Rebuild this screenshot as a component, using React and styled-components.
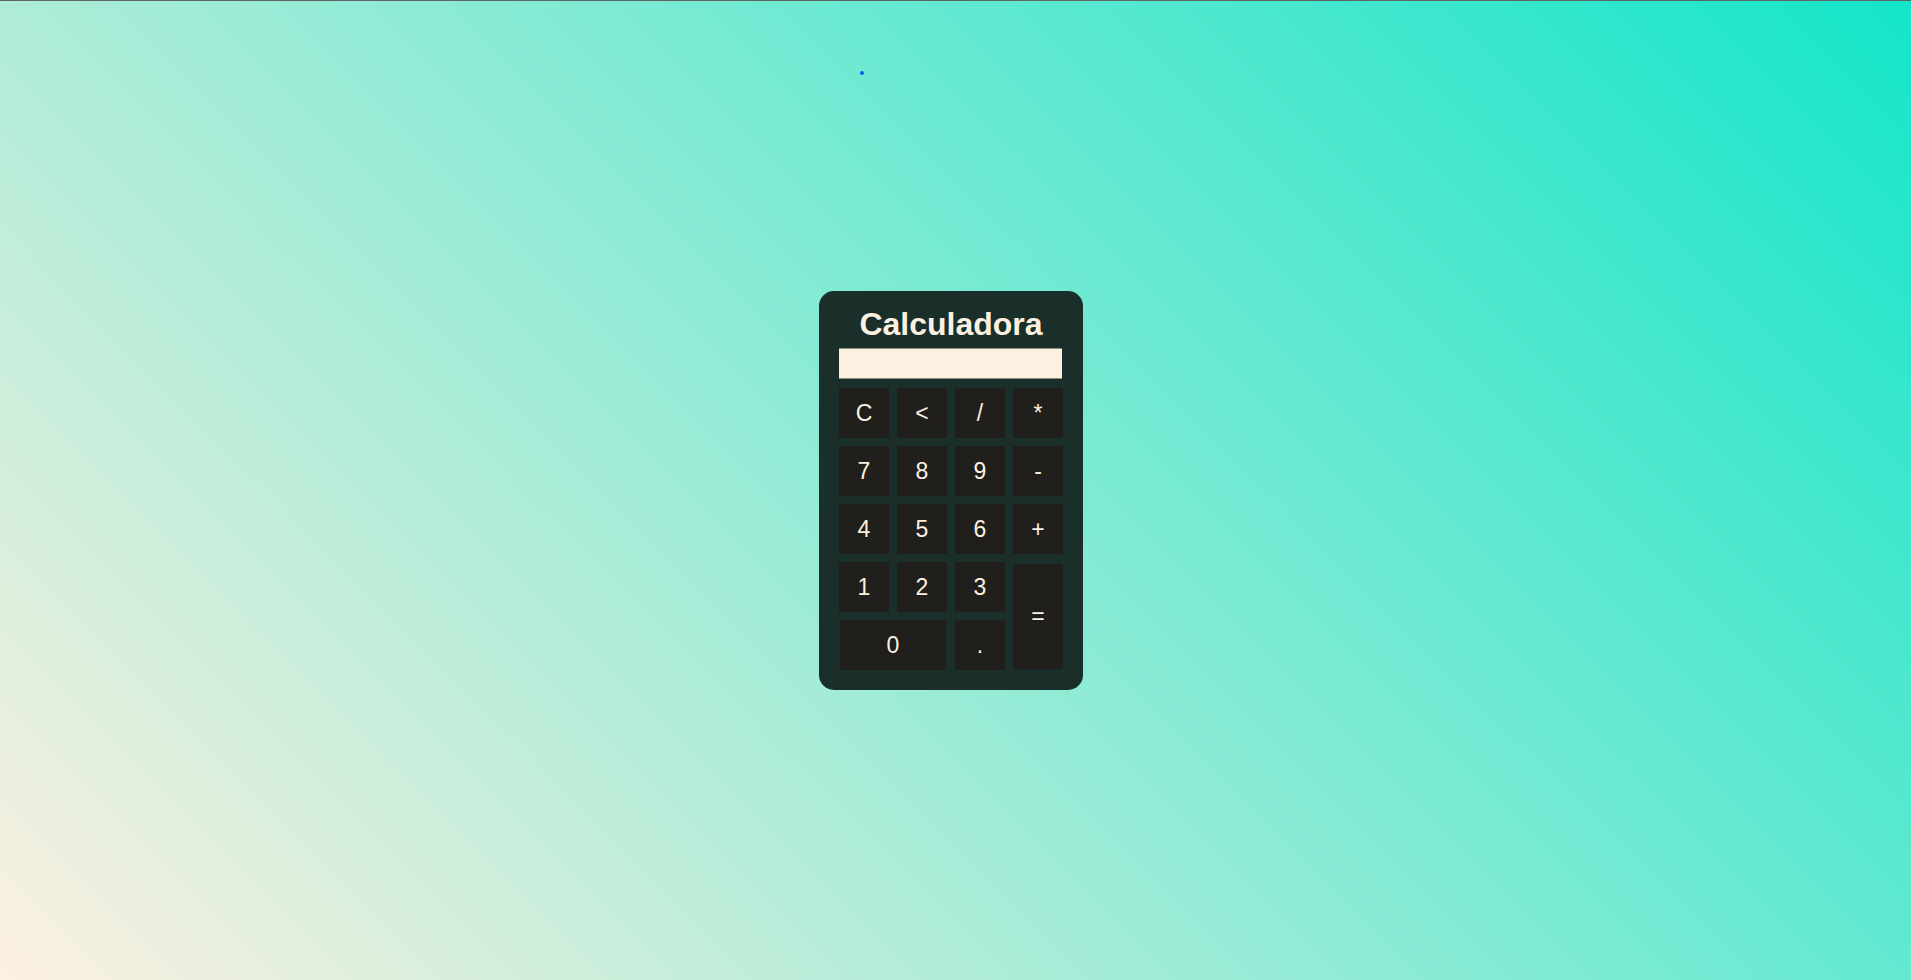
import React, { useState } from 'react';
import styled, { createGlobalStyle } from 'styled-components';

const GlobalStyle = createGlobalStyle`
    html, body {
        margin: 0;
        padding: 0;
        overflow: hidden;
    }
    body {
        font-family: 'Liberation Sans', Arial, sans-serif;
    }
`;

const Page = styled.div`
    position: relative;
    box-sizing: border-box;
    height: 100vh;
    border-top: 1px solid #5f6563;
    background: linear-gradient(45deg, #fdf0e0, #14e5c9);
    display: flex;
    align-items: center;
    justify-content: center;
    padding-right: 9px;
`;

const Dot = styled.span`
    position: absolute;
    left: 860px;
    top: 70px;
    width: 4px;
    height: 4px;
    border-radius: 50%;
    background: #0a5ce6;
`;

const Card = styled.div`
    width: 224px;
    padding: 15px 20px 20px;
    background: #1a2e2a;
    border-radius: 15px;
    display: flex;
    flex-direction: column;
`;

const Title = styled.h1`
    margin: 0 0 5px;
    font-size: 32px;
    font-weight: 700;
    text-align: center;
    color: #fdf0e0;
`;

const Display = styled.input`
    box-sizing: border-box;
    width: 223px;
    height: 31px;
    margin: 0 0 9px;
    border: none;
    border-top: 1px solid #8c8c84;
    border-bottom: 1px solid #8c8c84;
    background: #fdf0e0;
    font-family: 'Liberation Sans', Arial, sans-serif;
    font-size: 20px;
    text-align: right;
    padding: 0 6px;
    outline: none;
`;

const Keys = styled.div`
    display: grid;
    grid-template-columns: repeat(4, 50px);
    grid-auto-rows: 50px;
    gap: 8px;
`;

const Key = styled.button`
    border: none;
    padding: 0;
    margin: ${(p) => p.$inset || '0'};
    background: #201f1c;
    color: #fdf0e0;
    font-family: 'Liberation Sans', Arial, sans-serif;
    font-size: 23px;
    cursor: pointer;
    grid-column: ${(p) => (p.$wide ? 'span 2' : 'auto')};
    grid-row: ${(p) => (p.$tall ? 'span 2' : 'auto')};

    &:hover {
        background: #2b2a26;
    }
`;

const keys = [
    { label: 'C' }, { label: '<' }, { label: '/' }, { label: '*' },
    { label: '7' }, { label: '8' }, { label: '9' }, { label: '-' },
    { label: '4' }, { label: '5' }, { label: '6' }, { label: '+' },
    { label: '1' }, { label: '2' }, { label: '3' },
    { label: '=', tall: true, inset: '2px 0 1px' },
    { label: '0', wide: true, inset: '0 1px' }, { label: '.' },
];

const App = () => {
    const [value, setValue] = useState('');

    const handleKey = (label) => {
        if (label === 'C') return setValue('');
        if (label === '<') return setValue((v) => v.slice(0, -1));
        if (label === '=') {
            try {
                // eslint-disable-next-line no-new-func
                setValue(String(Function(`return (${value})`)()));
            } catch (e) {
                setValue('Erro');
            }
            return;
        }
        setValue((v) => v + label);
    };

    return (
        <>
            <GlobalStyle />
            <Page>
                <Dot />
                <Card>
                    <Title>Calculadora</Title>
                    <Display value={value} readOnly />
                    <Keys>
                        {keys.map((k) => (
                            <Key
                                key={k.label}
                                $wide={k.wide}
                                $tall={k.tall}
                                $inset={k.inset}
                                onClick={() => handleKey(k.label)}
                            >
                                {k.label}
                            </Key>
                        ))}
                    </Keys>
                </Card>
            </Page>
        </>
    );
};

export default App;
